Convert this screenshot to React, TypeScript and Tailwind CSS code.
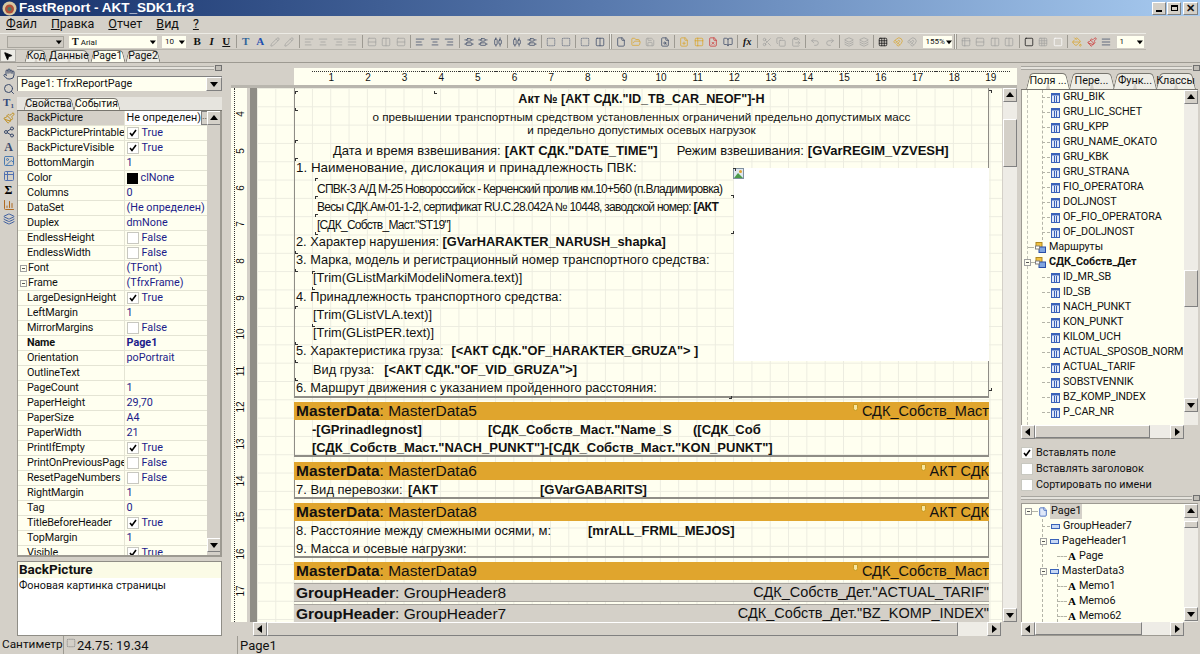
import type { ReactNode } from 'react';
import {
    AlignCenter, AlignHorizontalDistributeCenter, AlignJustify, AlignLeft, AlignRight, AlignVerticalDistributeCenter,
    BookOpen, ClipboardPaste, Columns2, Copy, File, FilePlus, FileX, FileSearch, FolderOpen, Grid3x3, Hand, Layers,
    Magnet, MousePointer2, PaintBucket, Paintbrush, Pencil, Redo2, Rows2, Save, Scissors, Search, Share2, Square,
    SquareDashed, Undo2, ChartColumn, Image, Table2,
} from 'lucide-react';

const ui = "font-['Roboto',sans-serif]";
const arial = "font-['Liberation_Sans',sans-serif]";
const bevel = 'border border-t-white border-l-white border-r-[#808080] border-b-[#808080] bg-[#d4d0c8]';

const toolbar: (any)[] = [
    ['sp', 7], ['combo', 57, ''], ['sp', 5], ['combo', 88, 'Arial'], ['sp', 5], ['combo', 24, '10'], ['sp', 4],
    ['t', 'B'], ['t', 'I'], ['t', 'U'], ['|'],
    ['t', 'T', '#33669a'], ['t', 'A', '#1f4fb0'], [Pencil], [Pencil], ['|'],
    [AlignLeft], [AlignCenter], [AlignRight], [AlignJustify], ['|'],
    [Rows2], [Columns2], [Rows2], ['|'],
    [AlignLeft, 1], [AlignCenter, 1], [AlignRight, 1], ['|'],
    [AlignVerticalDistributeCenter, 1], [AlignVerticalDistributeCenter, 1], [AlignHorizontalDistributeCenter, 1], ['|'],
    [AlignHorizontalDistributeCenter, 1], [AlignVerticalDistributeCenter, 1], ['|'],
    [SquareDashed, 1], [SquareDashed, 1], ['|'], [SquareDashed, 1], [Columns2, 1], ['||'],
    [File, 1], [FolderOpen, 2], [Save], [FileSearch, 1], ['|'],
    [FilePlus, 2], [Table2, 2], [FileX, 3], [BookOpen, 1], ['|'], ['fx'], ['|'],
    [Scissors], [Copy], [ClipboardPaste], ['|'], [Undo2], [Redo2], ['|'], [Layers], [Layers], ['|'],
    [Grid3x3, 4], [Magnet, 2], [Magnet], ['sp', 3], ['combo', 29, '155%'], ['||'],
    [Table2], [Rows2], [Columns2], [Columns2], ['|'],
    [Square, 4], [Grid3x3], [Square, 5], ['|'],
    [PaintBucket, 2], [Paintbrush, 3], [AlignJustify, 1], ['sp', 3], ['combo', 27, '1'],
];

const iconTone = ['text-[#a3a3a0]', 'text-[#3c4a66]', 'text-[#d9a52c]', 'text-[#cc3333]', 'text-[#111111]', 'text-[#ffffff]'];

const props: [string, string, string?][] = [
    ['BackPicture', 'Не определен)', 'edit'], ['BackPicturePrintable', 'True', 'on'], ['BackPictureVisible', 'True', 'on'],
    ['BottomMargin', '1'], ['Color', 'clNone', 'color'], ['Columns', '0'], ['DataSet', '(Не определен)'], ['Duplex', 'dmNone'],
    ['EndlessHeight', 'False', 'off'], ['EndlessWidth', 'False', 'off'], ['Font', '(TFont)', 'plus'], ['Frame', '(TfrxFrame)', 'plus'],
    ['LargeDesignHeight', 'True', 'on'], ['LeftMargin', '1'], ['MirrorMargins', 'False', 'off'], ['Name', 'Page1', 'bold'],
    ['Orientation', 'poPortrait'], ['OutlineText', ''], ['PageCount', '1'], ['PaperHeight', '29,70'], ['PaperSize', 'A4'],
    ['PaperWidth', '21'], ['PrintIfEmpty', 'True', 'on'], ['PrintOnPreviousPage', 'False', 'off'], ['ResetPageNumbers', 'False', 'off'],
    ['RightMargin', '1'], ['Tag', '0'], ['TitleBeforeHeader', 'True', 'on'], ['TopMargin', '1'], ['Visible', 'True', 'on'],
];

const fields1 = ['GRU_BIK', 'GRU_LIC_SCHET', 'GRU_KPP', 'GRU_NAME_OKATO', 'GRU_KBK', 'GRU_STRANA', 'FIO_OPERATORA', 'DOLJNOST', 'OF_FIO_OPERATORA', 'OF_DOLJNOST'];
const fields2 = ['ID_MR_SB', 'ID_SB', 'NACH_PUNKT', 'KON_PUNKT', 'KILOM_UCH', 'ACTUAL_SPOSOB_NORM', 'ACTUAL_TARIF', 'SOBSTVENNIK', 'BZ_KOMP_INDEX', 'P_CAR_NR'];

// corner marks of the memos on the report page, relative to the page box
const marks: [number, number, string][] = [
    [0, 3, 'tl'], [0, 20, 'bl'], [139, 3, 'bl'], [0, 52, 'tl'], [0, 70, 'tl'], [438, 80, 'tr'], [20, 90, 'tl'], [20, 108, 'tl'], [20, 126, 'tl'],
    [436, 107, 'tr'], [436, 143, 'br'], [20, 144, 'bl'], [0, 163, 'bl'], [0, 181, 'bl'], [17, 183, 'tl'], [17, 199, 'bl'], [0, 218, 'tl'], [17, 236, 'bl'], [0, 254, 'bl'],
    [0, 272, 'bl'], [0, 290, 'bl'], [434, 308, 'br'], [694, 2, 'tr'], [694, 300, 'br'],
];

function Tri({ dir }: { dir: 'up' | 'down' | 'left' | 'right' }) {
    const pts = { up: '0,6 4,1 8,6', down: '0,2 8,2 4,7', left: '6,0 6,8 1,4', right: '2,0 2,8 7,4' }[dir];
    return <svg width="8" height="8" viewBox="0 0 8 8"><polygon points={pts} fill="#000" /></svg>;
}

function SBtn({ dir, className = '' }: { dir: 'up' | 'down' | 'left' | 'right'; className?: string }) {
    return <div className={`${bevel} flex items-center justify-center shrink-0 w-[14px] h-[14px] ${className}`}><Tri dir={dir} /></div>;
}

function Check({ on }: { on?: boolean }) {
    return (
        <span className="inline-flex items-center justify-center w-[12px] h-[12px] bg-white border border-[#c8c8c0] shrink-0">
            {on && <svg width="8" height="8" viewBox="0 0 8 8"><path d="M1 4 L3 6.5 L7 1" stroke="#000" strokeWidth="1.6" fill="none" /></svg>}
        </span>
    );
}

function Tab({ label, active, className = '' }: { label: string; active?: boolean; className?: string }) {
    const fill = active ? 'bg-[#fffff0]' : 'bg-[#eeede6]';
    return (
        <div className={`relative flex items-center justify-center shrink-0 ${className}`}>
            <span className={`absolute left-0 top-0 bottom-0 w-1/2 -skew-x-[14deg] border-l border-t rounded-tl-sm border-[#77756e] ${fill}`} />
            <span className={`absolute right-0 top-0 bottom-0 w-1/2 skew-x-[14deg] border-r border-t rounded-tr-sm border-[#77756e] ${fill}`} />
            <span className="relative whitespace-nowrap">{label}</span>
        </div>
    );
}

function Grip({ className = '' }: { className?: string }) {
    return (
        <div className={`flex items-center h-[6px] ${className}`}>
            <div className="flex-1 h-[4px] border-y border-[#a8a6a0] bg-[#e4e2dc]" />
            <div className="w-[7px] h-[6px] border border-[#707070] bg-[#c0bdb6] ml-[1px]" />
        </div>
    );
}

function FieldIcon() {
    return (
        <svg width="9" height="10" viewBox="0 0 9 10" className="shrink-0">
            <rect x="0.5" y="0.5" width="8" height="9" fill="#dfe8f8" stroke="#3a62b8" />
            <rect x="0.5" y="0.5" width="8" height="2" fill="#3a62b8" />
            <path d="M3.5 3v6M5.5 3v6" stroke="#3a62b8" />
        </svg>
    );
}

function SetIcon() {
    return (
        <svg width="11" height="11" viewBox="0 0 11 11" className="shrink-0">
            <rect x="1" y="0.5" width="6" height="5" fill="#f0c040" stroke="#b08820" />
            <rect x="4" y="5" width="6.5" height="5.5" fill="#7fa4e0" stroke="#2a4ea8" />
            <rect x="0.5" y="4" width="4" height="3" fill="#fff" stroke="#808080" />
        </svg>
    );
}

function BandIcon() {
    return <span className="w-[9px] h-[5px] bg-[#c8d8f4] border border-[#3a62b8] shrink-0" />;
}

function AIcon() {
    return <span className="font-['Liberation_Serif',serif] font-bold text-[11px] leading-none text-black w-[8px] shrink-0">A</span>;
}

function Plus({ className = '' }: { className?: string }) {
    return (
        <span className={`relative w-[7px] h-[7px] border border-[#a0a0a0] bg-[#fffff0] shrink-0 flex items-center justify-center ${className}`}>
            <span className="w-[3px] h-px bg-[#555]" />
        </span>
    );
}

function TreeRow({ indent, line = 0, icon, children, className = '' }: { indent: number; line?: number; icon: ReactNode; children: ReactNode; className?: string }) {
    return (
        <div className={`relative flex items-center h-[15px] ${className}`} style={{ paddingLeft: indent }}>
            {line > 0 && <span className="border-t border-dashed border-[#b4b4a8] mr-[1px] shrink-0" style={{ width: line }} />}
            {icon}
            <span className="ml-[3px] whitespace-nowrap tracking-[-0.1px]">{children}</span>
        </div>
    );
}

function Band({ kind, name, right, gray }: { kind: string; name: string; right: string; gray?: boolean }) {
    return (
        <div className={`flex items-center justify-between leading-none pl-[2px] overflow-hidden ${gray ? 'h-[19px] bg-[#d4d0c8] border-y border-[#a9a69f]' : 'h-[18px] bg-[#e0a52d]'}`}>
            <span className="whitespace-nowrap text-[15.5px]"><b>{kind}</b>: {name}</span>
            <span className="flex items-start whitespace-nowrap text-[14.5px]">
                {!gray && <span className="w-[5px] h-[7px] bg-[#f6e6a0] border border-[#c99a20] rounded-b-sm mr-[4px] mb-[6px]" />}
                {right}
            </span>
        </div>
    );
}

function MemoLine({ className = '', children }: { className?: string; children: ReactNode }) {
    return <div className={`flex items-center h-[18px] whitespace-nowrap ${className}`}>{children}</div>;
}

export default function App() {
    return (
        <div className={`w-[1200px] h-[654px] flex flex-col overflow-hidden bg-[#d4d0c8] text-[#111] ${ui}`}>
            {/* Title */}
            <div className="h-[16px] flex items-center justify-between shrink-0 bg-gradient-to-r from-[#17316a] via-[#5879ad] to-[#a8cbf0] pl-[2px] pr-[2px]">
                <div className={`flex items-center gap-[2px] text-white font-bold text-[13.5px] leading-none ${arial}`}>
                    <svg width="15" height="15" viewBox="0 0 15 15"><circle cx="7.5" cy="7.5" r="7" fill="#d8c8a0" /><circle cx="7.5" cy="8" r="4.5" fill="#b0503a" /><circle cx="7.5" cy="8" r="2" fill="#4a7a6a" /></svg>
                    FastReport - AKT_SDK1.fr3
                </div>
                <div className="flex gap-[1px]">
                    <div className={`${bevel} w-[14px] h-[13px] relative`}><span className="absolute left-[3px] bottom-[2px] w-[6px] h-[2px] bg-black" /></div>
                    <div className={`${bevel} w-[14px] h-[13px] flex items-center justify-center`}><span className="w-[7px] h-[6px] border border-black border-t-2" /></div>
                    <div className={`${bevel} w-[15px] h-[13px] flex items-center justify-center text-[11px] font-bold leading-none ml-[1px]`}>✕</div>
                </div>
            </div>

            {/* Menu */}
            <div className="h-[17px] flex items-center shrink-0 text-[12.5px] leading-none pl-[6px] gap-[14px]">
                <span><u>Ф</u>айл</span><span><u>П</u>равка</span><span><u>О</u>тчет</span><span><u>В</u>ид</span><span><u>?</u></span>
            </div>

            {/* Toolbar */}
            <div className="h-[17px] w-[1146px] flex items-center shrink-0 border-b border-[#b8b5ad] border-t border-t-[#ecebe5] overflow-hidden">
                {toolbar.map((it, i) => {
                    if (it[0] === 'sp') return <span key={i} className="shrink-0" style={{ width: it[1] }} />;
                    if (it[0] === '|') return <span key={i} className="w-[1px] h-[13px] bg-[#9d9a92] mx-[2px] shrink-0" />;
                    if (it[0] === '||') return <span key={i} className="w-[3px] h-[15px] border-x border-[#9d9a92] bg-[#ecebe5] mx-[2px] shrink-0" />;
                    if (it[0] === 'combo') {
                        return (
                            <span key={i} className={`flex items-center justify-between h-[12px] shrink-0 text-[8px] leading-none pl-[3px] ${it[2] ? 'bg-[#fffff0]' : 'bg-[#cfcbc3] border border-[#a8a59d]'}`} style={{ width: it[1] }}>
                                <span>{it[2] === 'Arial' ? <><b className="font-['Liberation_Serif',serif] text-[10px]">T</b> Arial</> : it[2]}</span>
                                <span className="w-[9px] flex justify-center scale-75"><Tri dir="down" /></span>
                            </span>
                        );
                    }
                    if (it[0] === 't') {
                        return <span key={i} className={`w-[14.5px] text-center font-['Liberation_Serif',serif] font-bold text-[11px] leading-none shrink-0 ${it[1] === 'I' ? 'italic' : ''} ${it[1] === 'U' ? 'underline' : ''}`} style={{ color: it[2] }}>{it[1]}</span>;
                    }
                    if (it[0] === 'fx') return <span key={i} className="w-[14.5px] text-center font-['Liberation_Serif',serif] italic font-bold text-[10px] leading-none shrink-0">fx</span>;
                    const Ico = it[0];
                    return <span key={i} className={`w-[14.5px] flex justify-center shrink-0 ${iconTone[it[1] ?? 0]}`}><Ico size={10} strokeWidth={1.8} /></span>;
                })}
            </div>

            {/* Page tabs */}
            <div className="h-[13px] flex items-end shrink-0 text-[10.5px] leading-none border-b border-[#9d9a92]">
                <div className="w-[16px] h-[13px] bg-[#ecebe5] border border-[#b0aea8] flex justify-center items-center shrink-0"><MousePointer2 size={10} fill="#000" className="text-black" /></div>
                <div className="flex items-end gap-[4px] pl-[10px]">
                    <Tab label="Код" className="w-[20px] h-[12px]" />
                    <Tab label="Данные" className="w-[38px] h-[12px]" />
                    <Tab label="Page1" active className="w-[31px] h-[12px]" />
                    <Tab label="Page2" className="w-[32px] h-[12px]" />
                </div>
            </div>

            {/* Main */}
            <div className="h-[573px] flex shrink-0 overflow-hidden">
                {/* Tools */}
                <div className="w-[17px] shrink-0 flex flex-col items-center gap-[2.5px] pt-[5px] text-[#3a4a6a]">
                    <Hand size={12} />
                    <Search size={12} />
                    <span className="font-['Liberation_Serif',serif] font-bold text-[11px] leading-none h-[12px] text-[#334a7a]">T<sub className="text-[7px]">1</sub></span>
                    <Paintbrush size={12} className="text-[#c09020]" />
                    <Share2 size={12} />
                    <span className="font-['Liberation_Serif',serif] font-bold text-[12px] leading-none h-[12px]">A</span>
                    <Image size={12} className="text-[#4a7ab0]" />
                    <Table2 size={12} className="text-[#5070b0]" />
                    <span className="font-['Liberation_Serif',serif] font-bold text-[12px] leading-none h-[12px] text-black">Σ</span>
                    <ChartColumn size={12} className="text-[#b06a20]" />
                    <Layers size={12} className="text-[#4060a0]" />
                </div>

                {/* Object inspector */}
                <div className="w-[205px] shrink-0 flex flex-col">
                    <Grip className="mt-[2px]" />
                    <div className="mt-[5px] h-[15px] flex items-center justify-between bg-[#fffff0] border-t border-[#808080] text-[10.8px] leading-none pl-[3px] border-l border-l-[#808080]">
                        <span>Page1: TfrxReportPage</span>
                        <div className={`${bevel} w-[16px] h-[14px] flex items-center justify-center`}><Tri dir="down" /></div>
                    </div>
                    <div className="mt-[6px] h-[14px] flex items-end pl-[8px] gap-[3px] text-[10.3px] leading-none bg-[#e6e4de] border-b border-[#77756e]">
                        <Tab label="Свойства" className="w-[47px] h-[12px]" />
                        <Tab label="События" active className="w-[43px] h-[12px]" />
                    </div>
                    <div className="h-[446px] flex border-l border-[#9d9a92] border-b-2 border-b-[#9d9a92] border-r-2 border-r-[#9d9a92] overflow-hidden">
                        <div className="w-[189px] shrink-0 bg-[#fffff0] text-[10.8px] leading-none overflow-hidden">
                            {props.map(([n, v, k], i) => (
                                <div key={n} className="flex h-[15px] border-b border-[#e4e4d4] items-center">
                                    <div className={`w-[107px] h-full flex items-center pr-0 shrink-0 whitespace-nowrap tracking-[-0.15px] overflow-hidden border-r border-[#e4e4d4] ${i === 0 ? 'bg-[#d4d0c8]' : ''} ${k === 'plus' ? 'pl-[2px]' : 'pl-[9px]'} ${k === 'bold' ? 'font-bold' : ''}`}>
                                        {k === 'plus' && <span className="w-[7px] h-[7px] border border-[#a0a0a0] mr-[1px] flex items-center justify-center shrink-0"><span className="w-[3px] h-px bg-[#555]" /></span>}
                                        {n}
                                    </div>
                                    <div className={`flex-1 min-w-0 flex items-center h-full pl-[1.5px] whitespace-nowrap text-[#1c1c8a] ${k === 'bold' ? 'font-bold' : ''} ${k === 'edit' ? 'bg-white text-[#111]' : ''}`}>
                                        {(k === 'on' || k === 'off') && <span className="mr-[3px] flex"><Check on={k === 'on'} /></span>}
                                        {k === 'color' && <span className="w-[11px] h-[11px] bg-black mr-[3px] shrink-0" />}
                                        {v}
                                        {k === 'edit' && <span className="ml-auto w-[9px] h-[14px] bg-[#d4d0c8] border border-[#808080] text-center text-[8px] leading-[10px] shrink-0">...</span>}
                                    </div>
                                </div>
                            ))}
                        </div>
                        <div className="flex-1 flex flex-col justify-between bg-[#d4d0c8]">
                            <SBtn dir="up" />
                            <SBtn dir="down" className="mb-[3px]" />
                        </div>
                    </div>
                    <div className="mt-[4px] h-[75px] mr-[0px] border border-[#8f8d86] bg-white text-[10.8px] leading-none overflow-hidden">
                        <div className="h-[16px] bg-[#fbfbe6] flex items-center pl-[1px] font-bold text-[13.5px]">BackPicture</div>
                        <div className="mt-[3px] pl-[1px]">Фоновая картинка страницы</div>
                    </div>
                </div>

                <div className="w-[9px] shrink-0" />

                {/* Designer */}
                <div className={`w-[786px] shrink-0 flex flex-col ${arial}`}>
                    {/* Horizontal ruler */}
                    <div className="h-[5px] shrink-0" />
                    <div className="h-[17px] ml-[63px] bg-[#fffff0] shrink-0 pl-[19px] flex text-[10px] leading-none overflow-hidden">
                        {Array.from({ length: 19 }, (_, i) => (
                            <div key={i} className="w-[36.65px] shrink-0 text-center">
                                <div className="mt-[3px] border-t border-dotted border-[#333] -mx-[1px] h-[2px]" />
                                <span>{i + 1}</span>
                            </div>
                        ))}
                    </div>
                    <div className="h-[3px] shrink-0 bg-[#b9b6ae]" />
                    <div className="h-[534px] flex shrink-0">
                        {/* Vertical ruler */}
                        <div className="w-[16px] shrink-0 bg-[#fffff0] pt-[8px] overflow-hidden text-[10px] leading-none relative">
                            <div className="absolute left-[3px] top-0 bottom-0 border-l border-dotted border-[#333]" />
                            {Array.from({ length: 15 }, (_, i) => (
                                <div key={i} className="h-[36.65px] flex items-center justify-center pl-[4px]">
                                    <span className="-rotate-90">{i + 4}</span>
                                </div>
                            ))}
                        </div>
                        <div className="w-[3px] shrink-0" />
                        <div className="w-[7px] shrink-0 bg-[#8f8d86]" />
                        {/* Page */}
                        <div className="w-[745px] shrink-0 overflow-hidden pl-[37px] text-[12.8px] leading-none bg-[#fffff0] bg-[linear-gradient(#ecece0_1px,transparent_1px),linear-gradient(90deg,#ecece0_1px,transparent_1px)] bg-[size:18.32px_18.32px]">
                            <div className="w-[695px]">
                                <div className="relative h-[310px] border-l border-r border-b-2 border-[#8f8d86] pt-[2px]">
                                    <div className="absolute left-[439px] top-[80px] w-[255px] h-[193px] bg-white" />
                                    <svg width="11" height="11" viewBox="0 0 11 11" className="absolute left-[438px] top-[80px]"><rect x="0.5" y="0.5" width="10" height="10" fill="#dfe8f0" stroke="#8090a0" /><path d="M1 10 L5 5 L10 10Z" fill="#4a9a4a" /><circle cx="7.5" cy="3.5" r="1.5" fill="#e0a030" /></svg>
                                    {marks.map(([x, y, k], i) => (
                                        <span key={i} className={`absolute w-[3px] h-[3px] border-[#333] ${k[0] === 't' ? 'border-t' : 'border-b'} ${k[1] === 'l' ? 'border-l' : 'border-r'}`} style={{ left: x, top: y }} />
                                    ))}
                                    <MemoLine className="justify-center font-bold text-[12.6px] relative">Акт № [АКТ СДК."ID_TB_CAR_NEOF"]-Н</MemoLine>
                                    <div className="relative mt-[2px] text-center text-[11.7px] leading-[13px] h-[26px]">
                                        о превышении транспортным средством установленных ограничений предельно допустимых масс<br />и предельно допустимых осевых нагрузок
                                    </div>
                                    <MemoLine className="relative mt-[5px] pl-[38px] text-[13px]">
                                        Дата и время взвешивания: <b className="ml-[4px]">[АКТ СДК."DATE_TIME"]</b>
                                        <span className="ml-[19px]">Режим взвешивания:</span> <b className="ml-[4px]">[GVarREGIM_VZVESH]</b>
                                    </MemoLine>
                                    <MemoLine className="relative pl-[1px] text-[13.4px]">1. Наименование, дислокация и принадлежность ПВК:</MemoLine>
                                    <div className="relative pl-[22px] text-[12px] tracking-[-0.73px] mt-[3px] -mb-[1px]">
                                        <MemoLine>СПВК-3 А/Д М-25 Новороссийск - Керченский пролив км.10+560 (п.Владимировка)</MemoLine>
                                        <MemoLine>Весы СДК.Ам-01-1-2, сертификат RU.C.28.042A № 10448, заводской номер:&nbsp;<b>[АКТ</b></MemoLine>
                                        <MemoLine>[СДК_Собств_Маст."ST19"]</MemoLine>
                                    </div>
                                    <MemoLine className="relative pl-[1px]">2. Характер нарушения:&nbsp;<b>[GVarHARAKTER_NARUSH_shapka]</b></MemoLine>
                                    <MemoLine className="relative pl-[1px]">3. Марка, модель и регистрационный номер транспортного средства:</MemoLine>
                                    <MemoLine className="relative pl-[18px]">[Trim(GListMarkiModeliNomera.text)]</MemoLine>
                                    <MemoLine className="relative pl-[1px] mt-[1px]">4. Принадлежность транспортного средства:</MemoLine>
                                    <MemoLine className="relative pl-[18px]">[Trim(GListVLA.text)]</MemoLine>
                                    <MemoLine className="relative pl-[18px]">[Trim(GListPER.text)]</MemoLine>
                                    <MemoLine className="relative pl-[1px]">5. Характеристика груза:<b className="ml-[8px]">[&lt;АКТ СДК."OF_HARAKTER_GRUZA"&gt; ]</b></MemoLine>
                                    <MemoLine className="relative pl-[18px] mt-[1px]">Вид груза:<b className="ml-[10px]">[&lt;АКТ СДК."OF_VID_GRUZA"&gt;]</b></MemoLine>
                                    <MemoLine className="relative pl-[1px]">6. Маршрут движения с указанием пройденного расстояния:</MemoLine>
                                </div>

                                <div className="mt-[4px]"><Band kind="MasterData" name="MasterData5" right="СДК_Собств_Маст" /></div>
                                <div className="h-[37px] border-x border-b-2 border-[#8f8d86] font-bold text-[13px]">
                                    <MemoLine className="pl-[17px]">
                                        <span className="w-[176px]">-[GPrinadlegnost]</span><span className="w-[205px]">[СДК_Собств_Маст."Name_S</span><span>([СДК_Соб</span>
                                    </MemoLine>
                                    <MemoLine className="pl-[17px]">[СДК_Собств_Маст."NACH_PUNKT"]-[СДК_Собств_Маст."KON_PUNKT"]</MemoLine>
                                </div>

                                <div className="mt-[5px]"><Band kind="MasterData" name="MasterData6" right="АКТ СДК" /></div>
                                <div className="h-[19px] border-x border-b-2 border-[#8f8d86] text-[13px]">
                                    <MemoLine className="pl-[1px]">
                                        <span className="w-[112px]">7. Вид перевозки:</span><b className="w-[132px]">[АКТ</b><b>[GVarGABARITS]</b>
                                    </MemoLine>
                                </div>

                                <div className="mt-[4px]"><Band kind="MasterData" name="MasterData8" right="АКТ СДК" /></div>
                                <div className="h-[37px] border-x border-b-2 border-[#8f8d86] text-[13px]">
                                    <MemoLine className="pl-[1px]"><span className="w-[292px]">8. Расстояние между смежными осями, м:</span><b>[mrALL_FRML_MEJOS]</b></MemoLine>
                                    <MemoLine className="pl-[1px]">9. Масса и осевые нагрузки:</MemoLine>
                                </div>

                                <div className="mt-[4px]"><Band kind="MasterData" name="MasterData9" right="СДК_Собств_Маст" /></div>
                                <div className="mt-[3px]"><Band gray kind="GroupHeader" name="GroupHeader8" right={'СДК_Собств_Дет."ACTUAL_TARIF"'} /></div>
                                <div className="mt-[2px]"><Band gray kind="GroupHeader" name="GroupHeader7" right={'СДК_Собств_Дет."BZ_KOMP_INDEX"'} /></div>
                            </div>
                        </div>
                        <div className="w-[14px] shrink-0 flex flex-col ml-[1px] bg-[#eeece6]">
                            <SBtn dir="up" />
                            <div className={`${bevel} h-[48px] w-[14px] mt-[17px]`} />
                            <SBtn dir="down" className="mt-auto" />
                        </div>
                    </div>
                    {/* Horizontal scroll */}
                    <div className="h-[14px] ml-[22px] mr-[16px] flex bg-[#eeece6] shrink-0">
                        <SBtn dir="left" />
                        <div className={`${bevel} w-[691px] h-[14px]`} />
                        <div className="flex-1" />
                        <SBtn dir="right" />
                    </div>
                </div>

                <div className="w-[3px] shrink-0" />

                {/* Right panel */}
                <div className="w-[180px] shrink-0 flex flex-col text-[10.8px] leading-none pl-[1px] pr-[2px]">
                    <Grip className="mt-[2px] -mr-[2px]" />
                    <div className="h-[18px] mt-[1px] flex items-end pl-[7px] gap-[3px] border-b border-[#77756e] shrink-0">
                        <Tab label="Поля ..." active className="w-[40px] h-[16px]" />
                        <Tab label="Пере..." className="w-[41px] h-[16px]" />
                        <Tab label="Функ..." className="w-[40px] h-[16px]" />
                        <Tab label="Классы" className="w-[35px] h-[16px]" />
                    </div>
                    <div className="h-[335px] flex shrink-0 bg-[#fffff0] border-l border-[#9d9a92] overflow-hidden">
                        <div className="w-[162px] shrink-0 overflow-hidden relative">
                            <span className="absolute left-[20px] top-0 h-[150px] border-l border-dashed border-[#b4b4a8]" />
                            <span className="absolute left-[5px] top-0 bottom-0 border-l border-dashed border-[#c4c4b8]" />
                            {fields1.map(f => <TreeRow key={f} indent={20} line={8} icon={<FieldIcon />}>{f}</TreeRow>)}
                            <TreeRow indent={6} line={6} icon={<SetIcon />}>Маршруты</TreeRow>
                            <div className="relative flex items-center h-[15px] pl-[2px] font-bold">
                                <Plus /><span className="w-[4px] border-t border-dashed border-[#b4b4a8]" /><SetIcon /><span className="ml-[3px] whitespace-nowrap">СДК_Собств_Дет</span>
                            </div>
                            {fields2.map(f => <TreeRow key={f} indent={20} line={8} icon={<FieldIcon />}>{f}</TreeRow>)}
                        </div>
                        <div className="w-[14px] shrink-0 flex flex-col bg-[#eeece6]">
                            <SBtn dir="up" />
                            <div className={`${bevel} h-[37px] w-[14px] mt-[166px]`} />
                            <SBtn dir="down" className="mt-auto mb-[13px]" />
                        </div>
                    </div>
                    <div className="h-[14px] flex shrink-0 border-b border-[#9d9a92] mr-[14px] bg-[#eeece6]">
                        <SBtn dir="left" />
                        <div className={`${bevel} w-[115px] h-[13px]`} />
                        <div className="flex-1" />
                        <SBtn dir="right" />
                    </div>
                    <div className="mt-[6px] flex flex-col">
                        {[['Вставлять поле', true], ['Вставлять заголовок', false], ['Сортировать по имени', false]].map(([l, c]) => (
                            <div key={l as string} className="h-[16px] flex items-center gap-[3px]"><Check on={c as boolean} />{l}</div>
                        ))}
                    </div>
                    <Grip className="mt-[2px] -mr-[2px]" />
                    <div className="mt-[2px] h-[119px] flex shrink-0 bg-[#fffff0] border-l border-t border-[#9d9a92] overflow-hidden">
                        <div className="w-[162px] shrink-0 overflow-hidden relative">
                            <span className="absolute left-[20px] top-[15px] bottom-0 border-l border-dashed border-[#b4b4a8]" />
                            <span className="absolute left-[35px] top-[60px] bottom-0 border-l border-dashed border-[#b4b4a8]" />
                            <div className="relative flex items-center h-[15px] pl-[3px]">
                                <Plus />
                                <span className="w-[6px] border-t border-dashed border-[#b4b4a8]" />
                                <File size={10} className="text-[#3a62b8] shrink-0" fill="#dfe8f8" />
                                <span className="ml-[2px] bg-[#d4d0c8] px-[1px] h-[15px] flex items-center">Page1</span>
                            </div>
                            <TreeRow indent={20} line={8} icon={<BandIcon />}>GroupHeader7</TreeRow>
                            <div className="relative flex items-center h-[15px] pl-[18px]"><Plus /><span className="w-[3px]" /><BandIcon /><span className="ml-[3px]">PageHeader1</span></div>
                            <TreeRow indent={35} line={10} icon={<AIcon />}>Page</TreeRow>
                            <div className="relative flex items-center h-[15px] pl-[18px]"><Plus /><span className="w-[3px]" /><BandIcon /><span className="ml-[3px]">MasterData3</span></div>
                            <TreeRow indent={35} line={10} icon={<AIcon />}>Memo1</TreeRow>
                            <TreeRow indent={35} line={10} icon={<AIcon />}>Memo6</TreeRow>
                            <TreeRow indent={35} line={10} icon={<AIcon />}>Memo62</TreeRow>
                        </div>
                        <div className="w-[14px] shrink-0 flex flex-col bg-[#eeece6]">
                            <SBtn dir="up" />
                            <div className={`${bevel} h-[7px] w-[14px] mt-[3px]`} />
                            <SBtn dir="down" className="mt-auto mb-[1px]" />
                        </div>
                    </div>
                    <div className="h-[14px] flex shrink-0 border-b border-[#9d9a92] mr-[14px] bg-[#eeece6]">
                        <SBtn dir="left" />
                        <div className={`${bevel} w-[107px] h-[13px]`} />
                        <div className="flex-1" />
                        <SBtn dir="right" />
                    </div>
                </div>
            </div>

            {/* Status bar */}
            <div className="h-[18px] shrink-0 flex items-center text-[13px] leading-none">
                <span className="w-[63px] pl-[2px] text-[11.8px]">Сантиметр</span>
                <span className="w-[174px] flex items-center border-l border-[#9d9a92] h-full pl-[2px] gap-[1px]">
                    <SquareDashed size={10} className="text-[#777] mb-[4px]" />24.75: 19.34
                </span>
                <span className="flex-1 border-l border-[#9d9a92] h-full flex items-center pl-[2px]">Page1</span>
            </div>
        </div>
    );
}
